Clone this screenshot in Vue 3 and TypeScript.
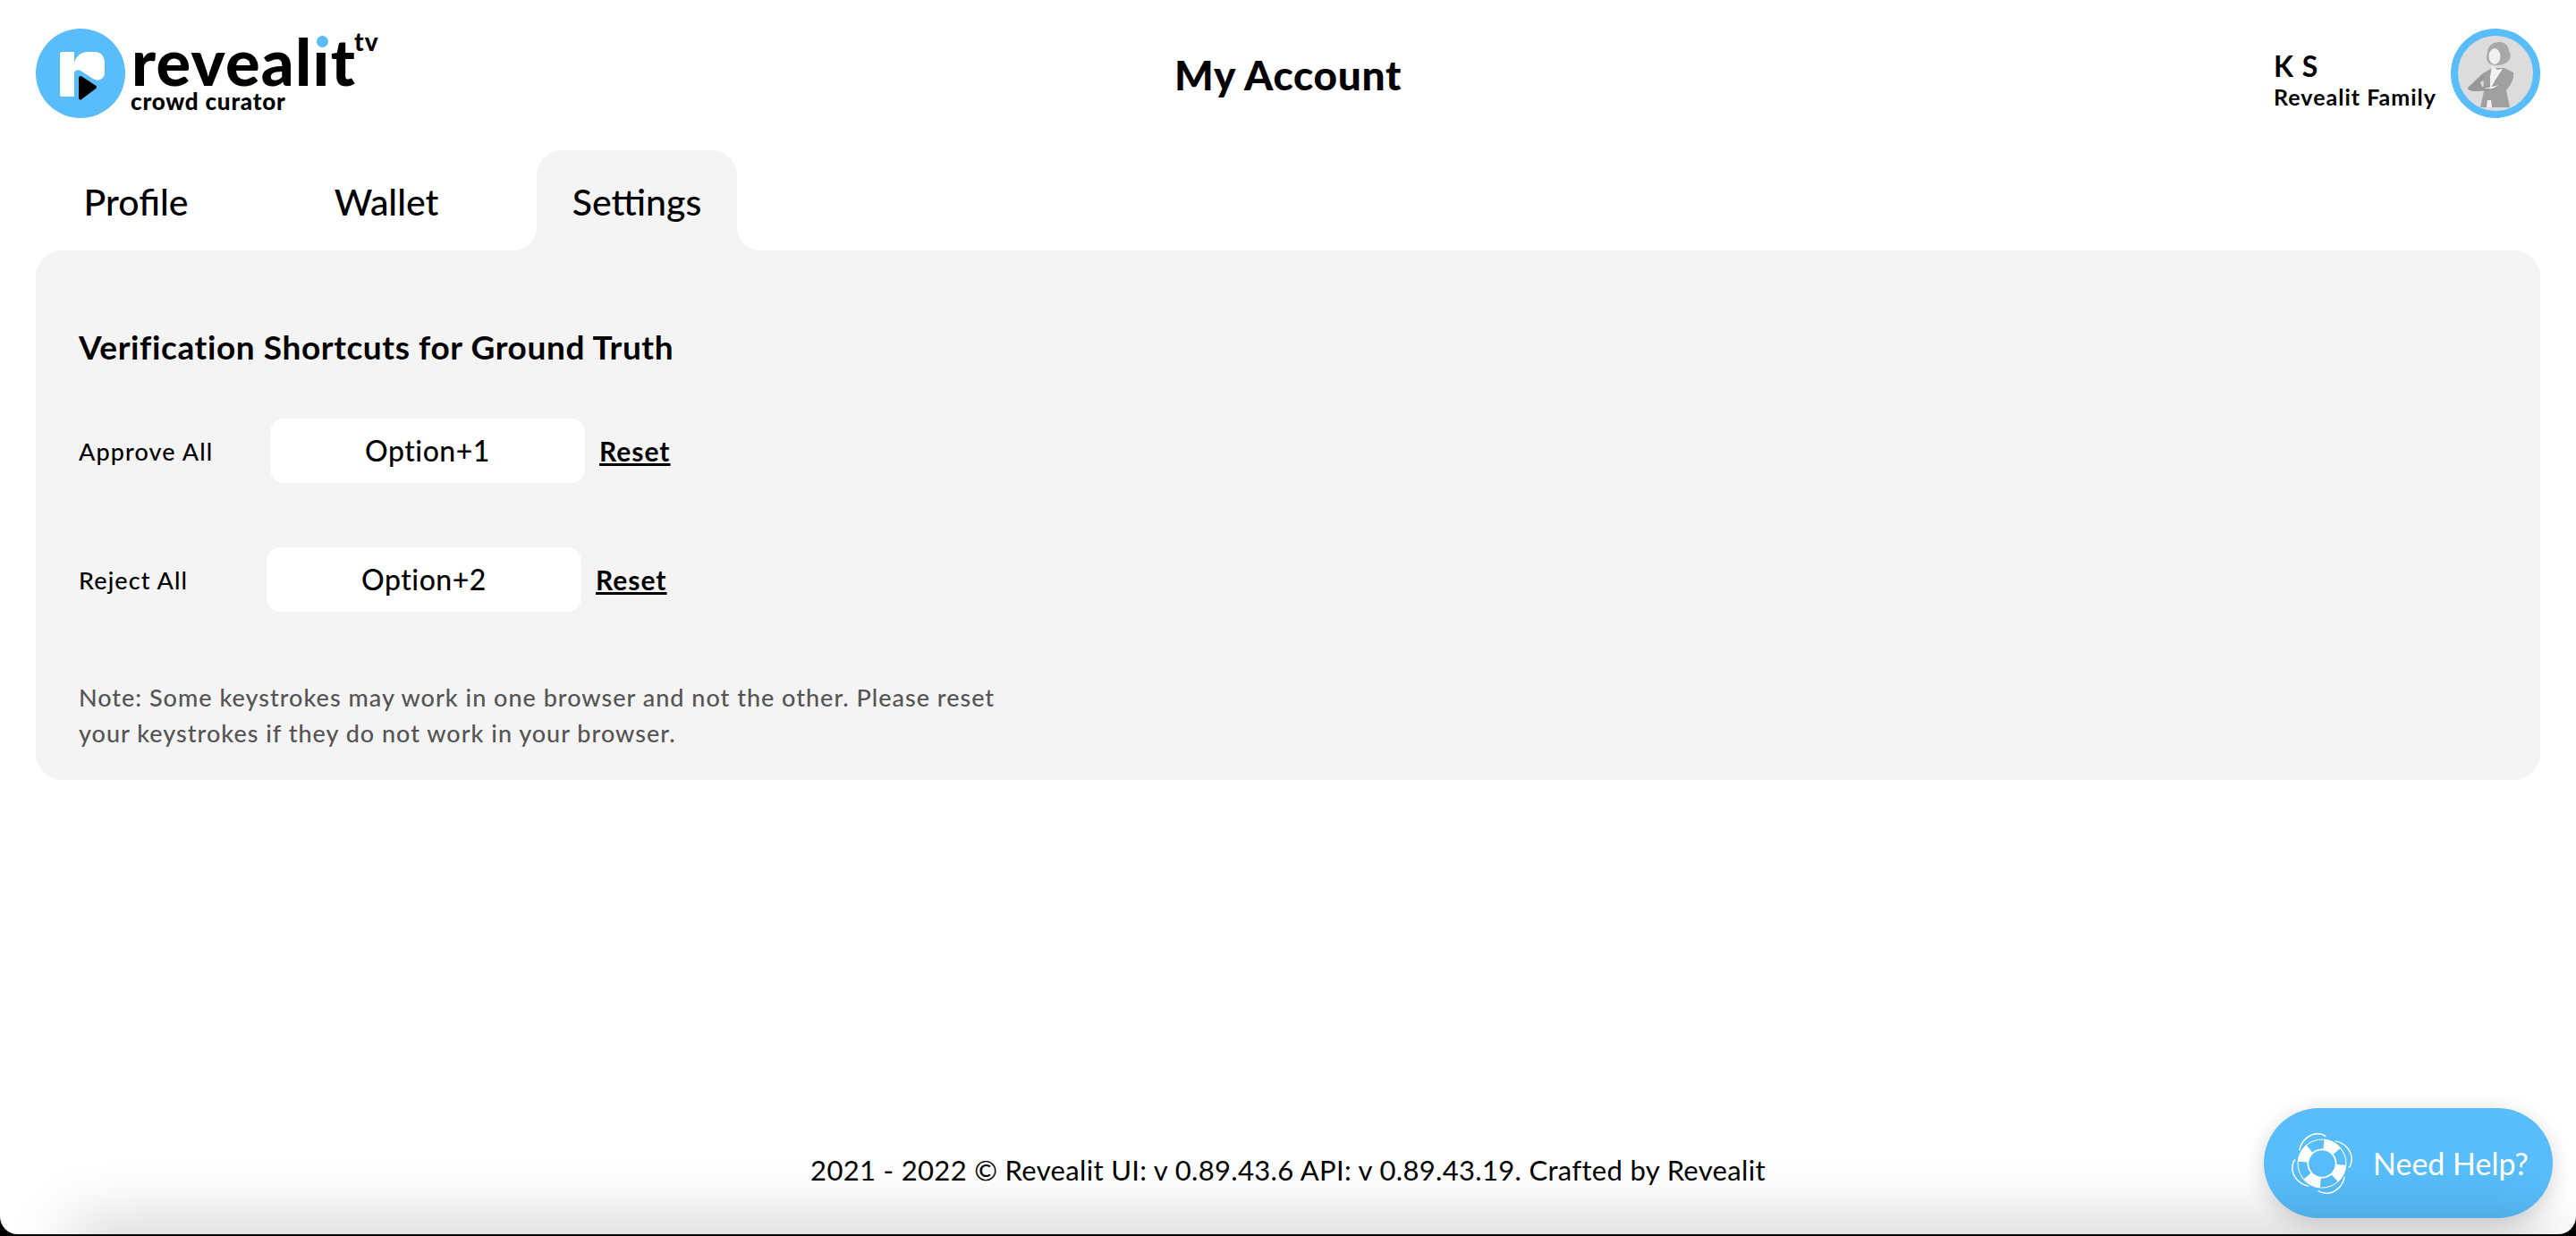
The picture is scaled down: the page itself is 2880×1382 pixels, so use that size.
<script setup lang="ts">
import { ref } from "vue";

type Shortcut = { label: string; keys: string; labelWidth: number };

const tabs = ["Profile", "Wallet", "Settings"];
const activeTab = ref("Settings");

const shortcuts: Shortcut[] = [
  { label: "Approve All", keys: "Option+1", labelWidth: 214 },
  { label: "Reject All", keys: "Option+2", labelWidth: 210 },
];

const quarters = [0, 90, 180, 270];
</script>

<template>
  <div class="window">
    <main class="page">
      <header class="topbar">
        <div class="brand">
          <svg class="brand-mark" viewBox="40 32 100 100" aria-hidden="true">
            <circle cx="90" cy="82" r="50" fill="#58bdfa" />
            <path
              d="M69 58H83V70C85 63 90 58 98 58H106C113 58 117 63 117 70V81C117 88 110 92 104 88L90 79C87 77 83 79 83 82V108H69C68 108 67 107 67 106V60C67 59 68 58 69 58Z"
              fill="#fff"
            />
            <path d="M90 87L106 97.500L90 109.500Z" fill="#000" stroke="#000" stroke-width="4" stroke-linejoin="round" />
          </svg>
          <div class="wordmark">
            <div class="wordmark-name">reveal<span class="dotless">ı</span>t<sup class="wordmark-tv">tv</sup></div>
            <div class="wordmark-sub">crowd curator</div>
          </div>
        </div>

        <h1 class="page-title">My Account</h1>

        <div class="user">
          <div class="user-text">
            <div class="user-name">K S</div>
            <div class="user-group">Revealit Family</div>
          </div>
          <svg class="avatar" viewBox="0 0 100 100" aria-hidden="true">
            <defs>
              <clipPath id="avatar-clip"><circle cx="50" cy="50" r="42" /></clipPath>
            </defs>
            <circle cx="50" cy="50" r="46" fill="#dcdcdc" stroke="#58bdfa" stroke-width="8" />
            <g clip-path="url(#avatar-clip)">
              <path d="M41 27C41 19 47 15 54 15C61 15 65 20 65 25C68 30 67 35 62 38C58 41 50 42 45 40C40 38 39 32 41 27Z" fill="#a8a8a8" />
              <path d="M36 50L46 44L60 44L70 49C71 56 68 62 62 69L66 88H33L37 70Z" fill="#a0a0a0" />
              <path d="M19 66L36 50L39 56L33 60L35 65L56 62L50 69L28 70C23 70 19 69 19 66Z" fill="#989898" />
              <path d="M46 41L52 46L58 45L50 57L44 68L44 54Z" fill="#f2f2f2" />
              <path d="M37 67L54 63L47 67Z" fill="#f2f2f2" />
              <path d="M41 80L45 80L46 88H40Z" fill="#f2f2f2" />
              <ellipse cx="49" cy="31" rx="6.500" ry="9" fill="#efefef" />
            </g>
          </svg>
        </div>
      </header>

      <nav class="tabs">
        <button
          v-for="tab in tabs"
          :key="tab"
          type="button"
          class="tab"
          :class="{ 'tab-active': tab === activeTab }"
          @click="activeTab = tab"
        >
          {{ tab }}
        </button>
      </nav>

      <section class="panel">
        <h2 class="panel-title">Verification Shortcuts for Ground Truth</h2>

        <div class="shortcut-list">
          <div v-for="s in shortcuts" :key="s.label" class="shortcut">
            <span class="shortcut-label" :style="{ width: s.labelWidth + 'px' }">{{ s.label }}</span>
            <div class="shortcut-keys">{{ s.keys }}</div>
            <a class="shortcut-reset" href="#" @click.prevent>Reset</a>
          </div>
        </div>

        <p class="note">
          Note: Some keystrokes may work in one browser and not the other. Please reset<br />
          your keystrokes if they do not work in your browser.
        </p>
      </section>

      <footer class="footer">2021 - 2022 © Revealit UI: v 0.89.43.6 API: v 0.89.43.19. Crafted by Revealit</footer>

      <button type="button" class="help">
        <svg class="help-icon" viewBox="-36 -36 72 72" aria-hidden="true">
          <g transform="rotate(-19)">
            <circle r="27.500" fill="#fff" />
            <circle r="21.500" fill="none" stroke="#58bdfa" stroke-width="10" stroke-dasharray="17 16.770" stroke-dashoffset="42.300" />
            <circle r="15.500" fill="#58bdfa" stroke="#fff" stroke-width="1.500" />
            <path
              v-for="q in quarters"
              :key="q"
              :transform="`rotate(${q})`"
              d="M-19 -22C-14 -32 -2 -36 6 -33C11 -31 13 -29 14 -27"
              fill="none"
              stroke="#fff"
              stroke-width="1.500"
            />
          </g>
        </svg>
        <span>Need Help?</span>
      </button>
    </main>
  </div>
</template>

<style>
html,
body {
  margin: 0;
  background: #000;
}
</style>

<style scoped>
.window {
  height: 1382px;
  background: #000;
  font-family: Lato, "Noto Sans", sans-serif;
  color: #000;
}

.page {
  position: relative;
  height: 1380px;
  box-sizing: border-box;
  padding: 32px 40px 0;
  background: #fff;
  border-radius: 0 0 20px 20px;
  overflow: hidden;
  display: flex;
  flex-direction: column;
}

/* soft shadow of whatever sits below the window */
.page::after {
  content: "";
  position: absolute;
  left: 90px;
  right: 40px;
  bottom: -30px;
  height: 30px;
  box-shadow: 0 0 70px 10px rgba(0, 0, 0, 0.22);
  pointer-events: none;
}

.topbar {
  display: grid;
  grid-template-columns: 1fr auto 1fr;
  align-items: flex-start;
  height: 99px;
}

.brand {
  display: flex;
  gap: 7px;
}

.brand-mark {
  width: 100px;
  height: 100px;
  flex: none;
}

.wordmark {
  display: flex;
  flex-direction: column;
}

.wordmark-name {
  position: relative;
  padding-top: 4px;
  font-size: 72px;
  font-weight: 900;
  line-height: 65px;
  width: 270px;
  letter-spacing: 1.300px;
}

.dotless {
  position: relative;
}

.dotless::before {
  content: "";
  position: absolute;
  left: 56%;
  top: 15px;
  width: 13px;
  height: 13px;
  margin-left: -6.500px;
  border-radius: 50%;
  background: #58bdfa;
}

.wordmark-tv {
  position: absolute;
  left: 249px;
  top: 2px;
  font-size: 28px;
  font-weight: 900;
  line-height: 24px;
}

.wordmark-sub {
  font-size: 26px;
  font-weight: 900;
  line-height: 24px;
  letter-spacing: 0.8px;
  margin-left: -1px;
}

.page-title {
  margin: 27px 0 0;
  font-size: 46px;
  font-weight: 900;
  line-height: 50px;
  letter-spacing: 0.7px;
  text-align: center;
}

.user {
  display: flex;
  justify-content: flex-end;
  gap: 16px;
}

.user-text {
  padding-top: 24px;
}

.user-name {
  font-size: 32px;
  font-weight: 700;
  line-height: 36px;
  letter-spacing: 1px;
}

.user-group {
  font-size: 25px;
  font-weight: 700;
  line-height: 32px;
  letter-spacing: 1px;
}

.avatar {
  width: 100px;
  height: 100px;
  flex: none;
}

.tabs {
  display: flex;
  gap: 56px;
  margin-top: 37px;
  height: 112px;
}

.tab {
  position: relative;
  width: 224px;
  padding: 2px 0 0;
  border: 0;
  border-radius: 28px 28px 0 0;
  background: transparent;
  color: #000;
  font-family: inherit;
  font-size: 41px;
  font-weight: 500;
  cursor: pointer;
}

.tab-active {
  background: #f4f4f4;
}

.tab-active::before,
.tab-active::after {
  content: "";
  position: absolute;
  bottom: 0;
  width: 26px;
  height: 26px;
}

.tab-active::before {
  left: -26px;
  background: radial-gradient(circle at 0 0, transparent 25.500px, #f4f4f4 26px);
}

.tab-active::after {
  right: -26px;
  background: radial-gradient(circle at 100% 0, transparent 25.500px, #f4f4f4 26px);
}

.panel {
  padding: 88px 48px 32px;
  background: #f4f4f4;
  border-radius: 30px;
}

.panel-title {
  margin: 0 0 60px;
  font-size: 37px;
  font-weight: 700;
  line-height: 40px;
  letter-spacing: 0.6px;
}

.shortcut-list {
  display: flex;
  flex-direction: column;
  gap: 72px;
}

.shortcut {
  display: flex;
  align-items: center;
}

.shortcut-label {
  flex: none;
  font-size: 27px;
  font-weight: 500;
  letter-spacing: 1.100px;
}

.shortcut-keys {
  width: 352px;
  height: 72px;
  background: #fff;
  border-radius: 16px;
  font-size: 32px;
  font-weight: 500;
  line-height: 72px;
  letter-spacing: 0.5px;
  text-align: center;
}

.shortcut-reset {
  margin-left: 16px;
  color: #000;
  font-size: 30px;
  font-weight: 700;
  letter-spacing: 1px;
}

.note {
  margin: 76px 0 0;
  color: #555;
  font-size: 27px;
  font-weight: 500;
  line-height: 40px;
  letter-spacing: 1px;
}

.footer {
  position: absolute;
  left: 0;
  right: 0;
  top: 1288px;
  font-size: 31px;
  line-height: 40px;
  letter-spacing: 0.33px;
  text-align: center;
}

.help {
  position: absolute;
  left: 2531px;
  top: 1239px;
  width: 323px;
  height: 123px;
  display: flex;
  align-items: center;
  gap: 21px;
  padding: 0 0 0 29px;
  border: 0;
  border-radius: 62px;
  background: #58bdfa;
  box-shadow: 0 6px 24px rgba(0, 0, 0, 0.16);
  color: #fff;
  font-family: inherit;
  font-size: 34px;
  font-weight: 400;
  cursor: pointer;
}

.help-icon {
  width: 72px;
  height: 72px;
  flex: none;
}
</style>
